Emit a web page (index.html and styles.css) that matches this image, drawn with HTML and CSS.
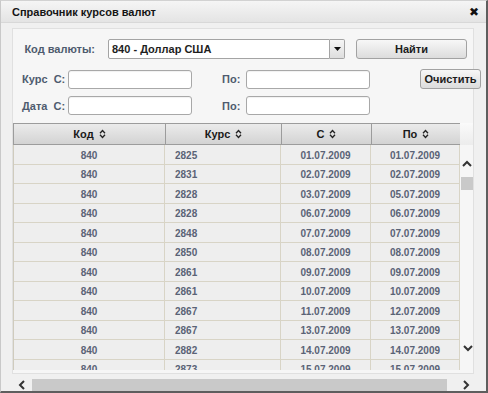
FILE: index.html
```html
<!DOCTYPE html>
<html lang="ru">
<head>
<meta charset="utf-8">
<title>Справочник курсов валют</title>
<link rel="stylesheet" href="styles.css">
</head>
<body>
<div class="win">
  <div class="titlebar">
    <span class="title">Справочник курсов валют</span>
    <span class="close">✖</span>
  </div>
  <div class="panel">
    <div class="row row1">
      <label class="lbl lbl-code">Код валюты:</label>
      <div class="select">
        <div class="select-val">840 - Доллар США</div>
        <div class="select-btn"><svg width="7" height="4" viewBox="0 0 7 4"><path d="M0 0 H7 L3.5 4 Z" fill="#111"/></svg></div>
      </div>
      <button class="btn btn-find">Найти</button>
    </div>
    <div class="row row2">
      <label class="lbl lbl-from">Курс&nbsp; С:</label>
      <div class="input"></div>
      <label class="lbl lbl-to">По:</label>
      <div class="input"></div>
      <button class="btn btn-clear">Очистить</button>
    </div>
    <div class="row row3">
      <label class="lbl lbl-from">Дата&nbsp; С:</label>
      <div class="input"></div>
      <label class="lbl lbl-to">По:</label>
      <div class="input"></div>
    </div>
    <div class="grid">
      <div class="table">
        <div class="thead">
          <div class="th">Код <svg class="sort" width="7" height="10" viewBox="0 0 7 10"><path d="M1 4.2 L3.5 1.5 L6 4.2 M1 5.8 L3.5 8.5 L6 5.8" fill="none" stroke="#222" stroke-width="1.3"/></svg></div>
          <div class="th">Курс <svg class="sort" width="7" height="10" viewBox="0 0 7 10"><path d="M1 4.2 L3.5 1.5 L6 4.2 M1 5.8 L3.5 8.5 L6 5.8" fill="none" stroke="#222" stroke-width="1.3"/></svg></div>
          <div class="th">С <svg class="sort" width="7" height="10" viewBox="0 0 7 10"><path d="M1 4.2 L3.5 1.5 L6 4.2 M1 5.8 L3.5 8.5 L6 5.8" fill="none" stroke="#222" stroke-width="1.3"/></svg></div>
          <div class="th">По <svg class="sort" width="7" height="10" viewBox="0 0 7 10"><path d="M1 4.2 L3.5 1.5 L6 4.2 M1 5.8 L3.5 8.5 L6 5.8" fill="none" stroke="#222" stroke-width="1.3"/></svg></div>
        </div>
        <div class="tbody">
          <div class="tr"><div class="td c">840</div><div class="td l">2825</div><div class="td c">01.07.2009</div><div class="td c">01.07.2009</div></div>
          <div class="tr"><div class="td c">840</div><div class="td l">2831</div><div class="td c">02.07.2009</div><div class="td c">02.07.2009</div></div>
          <div class="tr"><div class="td c">840</div><div class="td l">2828</div><div class="td c">03.07.2009</div><div class="td c">05.07.2009</div></div>
          <div class="tr"><div class="td c">840</div><div class="td l">2828</div><div class="td c">06.07.2009</div><div class="td c">06.07.2009</div></div>
          <div class="tr"><div class="td c">840</div><div class="td l">2848</div><div class="td c">07.07.2009</div><div class="td c">07.07.2009</div></div>
          <div class="tr"><div class="td c">840</div><div class="td l">2850</div><div class="td c">08.07.2009</div><div class="td c">08.07.2009</div></div>
          <div class="tr"><div class="td c">840</div><div class="td l">2861</div><div class="td c">09.07.2009</div><div class="td c">09.07.2009</div></div>
          <div class="tr"><div class="td c">840</div><div class="td l">2861</div><div class="td c">10.07.2009</div><div class="td c">10.07.2009</div></div>
          <div class="tr"><div class="td c">840</div><div class="td l">2867</div><div class="td c">11.07.2009</div><div class="td c">12.07.2009</div></div>
          <div class="tr"><div class="td c">840</div><div class="td l">2867</div><div class="td c">13.07.2009</div><div class="td c">13.07.2009</div></div>
          <div class="tr"><div class="td c">840</div><div class="td l">2882</div><div class="td c">14.07.2009</div><div class="td c">14.07.2009</div></div>
          <div class="tr"><div class="td c">840</div><div class="td l">2873</div><div class="td c">15.07.2009</div><div class="td c">15.07.2009</div></div>
        </div>
      </div>
      <div class="vscroll">
        <div class="vscroll-head"></div>
        <svg class="arrow-up" width="10" height="7" viewBox="0 0 10 7"><path d="M1 6 L5 2 L9 6" fill="none" stroke="#333" stroke-width="2"/></svg>
        <div class="vthumb"></div>
        <div class="vspace"></div>
        <svg class="arrow-down" width="10" height="7" viewBox="0 0 10 7"><path d="M1 1 L5 5 L9 1" fill="none" stroke="#333" stroke-width="2"/></svg>
      </div>
    </div>
  </div>
  <div class="hscroll">
    <svg class="arrow-left" width="7" height="10" viewBox="0 0 7 10"><path d="M6 1 L2 5 L6 9" fill="none" stroke="#333" stroke-width="2"/></svg>
    <div class="htrack"></div>
    <svg class="arrow-right" width="7" height="10" viewBox="0 0 7 10"><path d="M1 1 L5 5 L1 9" fill="none" stroke="#333" stroke-width="2"/></svg>
  </div>
</div>
</body>
</html>
```

FILE: styles.css
```css
* { box-sizing: border-box; }
html, body { margin: 0; padding: 0; }
body {
  width: 488px;
  height: 393px;
  overflow: hidden;
  background: #ffffff;
  font-family: "Liberation Sans", Arial, sans-serif;
}
.win {
  width: 488px;
  height: 393px;
  display: flex;
  flex-direction: column;
  background: #f0f0f0;
  border-left: 1px solid #c9c9c9;
  border-top: 1px solid #d2d2d2;
  border-right: 2px solid #5e5e5e;
  border-bottom: 2px solid #5e5e5e;
  overflow: hidden;
}
.titlebar {
  flex: none;
  height: 22px;
  display: flex;
  align-items: center;
  justify-content: space-between;
  padding: 0 7px 0 11px;
  background: linear-gradient(#f5f5f5, #e4e4e4);
  border-bottom: 1px solid #d8d8d8;
}
.title { font-size: 11px; font-weight: bold; color: #151515; }
.close { font-family: "DejaVu Sans", sans-serif; font-size: 12px; color: #111; margin-top: 1px; }

.panel {
  flex: none;
  margin: 5px 0 0 11px;
  width: 462px;
  height: 346px;
  border: 1px solid #e0e0e0;
  background: #f6f6f6;
  padding-top: 10px;
}
.row { display: flex; align-items: center; }
.row > * { flex: none; }
.row1 { height: 20px; }
.row2 { height: 20px; margin-top: 10px; }
.row3 { height: 19px; margin-top: 7px; }
.lbl {
  font-size: 11px;
  font-weight: bold;
  color: #4e5b6e;
  white-space: nowrap;
}
.lbl-code { width: 82px; text-align: right; margin-right: 13px; }
.lbl-from { width: 55px; padding-left: 9px; }
.lbl-to { width: 24px; margin-left: 30px; }

.select { display: flex; width: 237px; height: 20px; }
.select-val {
  width: 222px;
  height: 20px;
  background: #fff;
  border: 1px solid #a4a4a4;
  border-radius: 2px 0 0 2px;
  font-size: 11px;
  font-weight: bold;
  color: #1e1e1e;
  padding: 3px 0 0 3px;
}
.select-btn {
  width: 15px;
  height: 20px;
  border: 1px solid #a4a4a4;
  border-left: none;
  border-radius: 0 2px 2px 0;
  background: linear-gradient(#f6f6f6, #dedede);
  display: flex;
  align-items: center;
  justify-content: center;
}
.input {
  width: 124px;
  height: 19px;
  background: #fff;
  border: 1px solid #a8a8a8;
  border-radius: 3px;
  box-shadow: inset 0 1px 1px rgba(0,0,0,0.06);
}
.btn {
  height: 20px;
  border: 1px solid #a2a2a2;
  border-radius: 3px;
  background: linear-gradient(#f7f7f7, #dcdcdc);
  font-family: "Liberation Sans", Arial, sans-serif;
  font-size: 11px;
  font-weight: bold;
  color: #1b1b1b;
  padding: 0;
}
.btn-find { width: 111px; margin-left: 11px; }
.btn-clear { width: 61px; margin-left: 50px; height: 20px; }

.grid { display: flex; margin-top: 8px; height: 247px; }
.table { width: 447px; display: flex; flex-direction: column; }
.thead {
  display: grid;
  grid-template-columns: 152px 116px 90px 89px;
  height: 22px;
  flex: none;
  border: 1px solid #9c9c9c;
  border-right: none;
  background: linear-gradient(#ebebeb, #d3d3d3);
}
.th {
  display: flex;
  align-items: center;
  justify-content: center;
  gap: 5px;
  font-size: 11px;
  font-weight: bold;
  color: #1a1a1a;
  border-right: 1px solid #9c9c9c;
}
.sort { flex: none; }
.tbody {
  flex: 1;
  overflow: hidden;
  border-left: 1px solid #cfcbbd;
  background: #eeeeee;
}
.tr {
  display: grid;
  grid-template-columns: 151px 116px 90px 89px;
  height: 19.5px;
  border-bottom: 1px solid #d8d4c6;
}
.td {
  font-size: 10px;
  font-weight: bold;
  color: #5a6376;
  display: flex;
  align-items: center;
  padding-top: 2px;
  border-right: 1px solid #d8d4c6;
  white-space: nowrap;
}
.td.c { justify-content: center; }
.td.l { padding-left: 10px; }

.vscroll {
  width: 13px;
  display: flex;
  flex-direction: column;
  align-items: center;
  background: #f6f6f6;
}
.vscroll-head {
  width: 13px;
  height: 22px;
  flex: none;
  background: linear-gradient(#fafafa, #ececec);
}
.arrow-up { margin-top: 15px; flex: none; }
.vthumb { width: 12px; height: 13px; margin-top: 10px; background: #c9c9c9; flex: none; }
.vspace { flex: 1; }
.arrow-down { margin-bottom: 18px; flex: none; margin-left: 2px; }

.hscroll {
  flex: none;
  height: 13px;
  margin-top: 4px;
  display: flex;
  align-items: center;
  padding-left: 17px;
}
.htrack { width: 415px; height: 12px; margin-left: 7px; background: #c9c9c9; }
.arrow-right { margin-left: 16px; }
```
